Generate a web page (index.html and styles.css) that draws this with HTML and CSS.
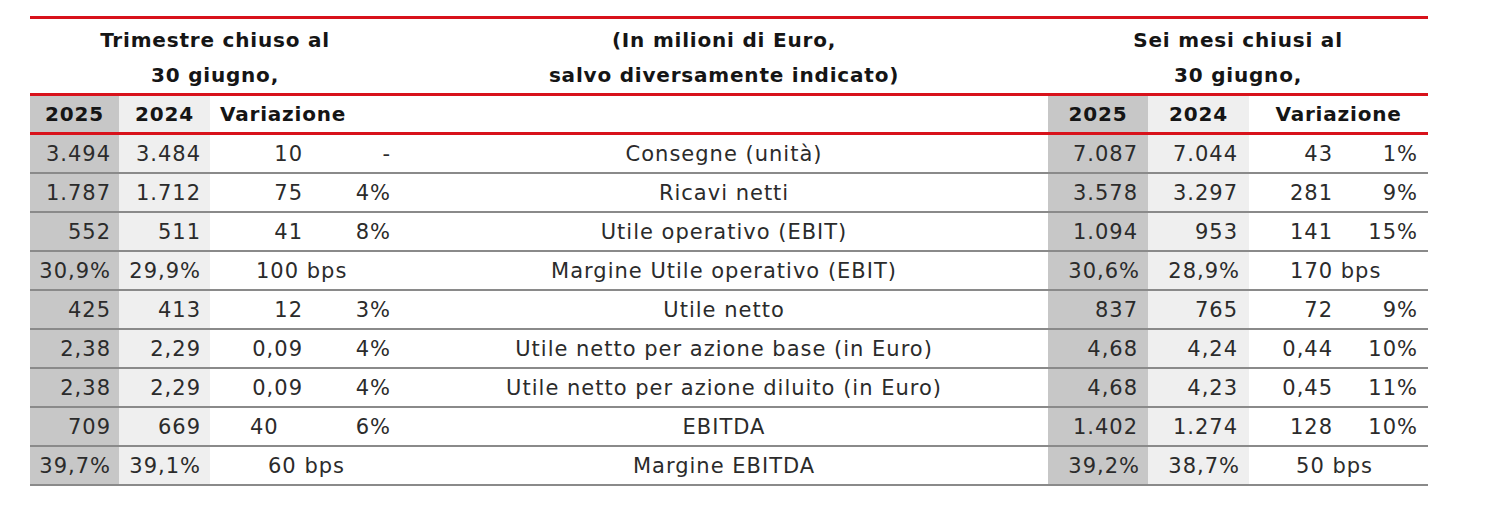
FILE: index.html
```html
<!DOCTYPE html>
<html lang="it">
<head>
<meta charset="utf-8">
<title>Risultati</title>
<link rel="stylesheet" href="styles.css">
</head>
<body>
<div class="page">
<table class="fin">
  <colgroup>
    <col class="c-a"><col class="c-b"><col class="c-v"><col class="c-p">
    <col class="c-label">
    <col class="c-a2"><col class="c-b2"><col class="c-v2"><col class="c-p2">
  </colgroup>
  <thead>
    <tr class="h1">
      <th colspan="4" class="grp">Trimestre chiuso al<br>30 giugno,</th>
      <th class="grp">(In milioni di Euro,<br>salvo diversamente indicato)</th>
      <th colspan="4" class="grp">Sei mesi chiusi al<br>30 giugno,</th>
    </tr>
    <tr class="h2">
      <th class="dk">2025</th><th class="lt">2024</th><th colspan="2" class="var-l">Variazione</th>
      <th></th>
      <th class="dk">2025</th><th class="lt">2024</th><th colspan="2" class="var-r">Variazione</th>
    </tr>
  </thead>
  <tbody>
    <tr><td class="dk">3.494</td><td class="lt">3.484</td><td class="v">10</td><td class="p">-</td><td class="lbl">Consegne (unità)</td><td class="dk">7.087</td><td class="lt">7.044</td><td class="v">43</td><td class="p">1%</td></tr>
    <tr><td class="dk">1.787</td><td class="lt">1.712</td><td class="v">75</td><td class="p">4%</td><td class="lbl">Ricavi netti</td><td class="dk">3.578</td><td class="lt">3.297</td><td class="v">281</td><td class="p">9%</td></tr>
    <tr><td class="dk">552</td><td class="lt">511</td><td class="v">41</td><td class="p">8%</td><td class="lbl">Utile operativo (EBIT)</td><td class="dk">1.094</td><td class="lt">953</td><td class="v">141</td><td class="p">15%</td></tr>
    <tr><td class="dk">30,9%</td><td class="lt">29,9%</td><td colspan="2" class="bps-l">100 bps</td><td class="lbl">Margine Utile operativo (EBIT)</td><td class="dk">30,6%</td><td class="lt">28,9%</td><td colspan="2" class="bps-r">170 bps</td></tr>
    <tr><td class="dk">425</td><td class="lt">413</td><td class="v">12</td><td class="p">3%</td><td class="lbl">Utile netto</td><td class="dk">837</td><td class="lt">765</td><td class="v">72</td><td class="p">9%</td></tr>
    <tr><td class="dk">2,38</td><td class="lt">2,29</td><td class="v">0,09</td><td class="p">4%</td><td class="lbl">Utile netto per azione base (in Euro)</td><td class="dk">4,68</td><td class="lt">4,24</td><td class="v">0,44</td><td class="p">10%</td></tr>
    <tr><td class="dk">2,38</td><td class="lt">2,29</td><td class="v">0,09</td><td class="p">4%</td><td class="lbl">Utile netto per azione diluito (in Euro)</td><td class="dk">4,68</td><td class="lt">4,23</td><td class="v">0,45</td><td class="p">11%</td></tr>
    <tr><td class="dk">709</td><td class="lt">669</td><td class="v left">40</td><td class="p">6%</td><td class="lbl">EBITDA</td><td class="dk">1.402</td><td class="lt">1.274</td><td class="v">128</td><td class="p">10%</td></tr>
    <tr><td class="dk">39,7%</td><td class="lt">39,1%</td><td colspan="2" class="bps-l2">60 bps</td><td class="lbl">Margine EBITDA</td><td class="dk">39,2%</td><td class="lt">38,7%</td><td colspan="2" class="bps-r2">50 bps</td></tr>
  </tbody>
</table>
</div>
</body>
</html>
```

FILE: styles.css
```css
html, body {
  margin: 0;
  padding: 0;
  background: #ffffff;
}

.page {
  padding: 16px 0 0 30px;
}

.fin {
  border-collapse: collapse;
  table-layout: fixed;
  width: 1398px;
  font-family: "DejaVu Sans", "Liberation Sans", sans-serif;
  font-size: 21px;
  letter-spacing: 1px;
  color: #2b2b2b;
}

.c-a { width: 89px; }
.c-b { width: 91px; }
.c-v { width: 100px; }
.c-p { width: 90px; }
.c-label { width: 648px; }
.c-a2 { width: 100px; }
.c-b2 { width: 101px; }
.c-v2 { width: 91px; }
.c-p2 { width: 88px; }

.fin th, .fin td {
  padding: 0;
  white-space: nowrap;
}

.fin th {
  font-size: 20px;
  font-weight: 700;
  letter-spacing: 0.8px;
  color: #151515;
}

.h1 th {
  border-top: 3px solid #d8121b;
  border-bottom: 3px solid #d8121b;
  height: 71px;
  line-height: 35px;
  text-align: center;
  vertical-align: middle;
  padding-top: 3px;
}

.h2 th {
  border-bottom: 3px solid #d8121b;
  height: 36px;
  text-align: center;
  vertical-align: middle;
}

.h2 .var-l {
  text-align: left;
  padding-left: 10px;
}

.h2 .var-r {
  text-align: center;
}

.fin td {
  border-bottom: 2px solid #8a8a8a;
  height: 37px;
  text-align: right;
  vertical-align: middle;
}

.dk { background: #c7c7c7; }
.lt { background: #efefef; }

td.dk { padding-right: 8px; }
td.lt { padding-right: 9px; }

.fin td:nth-child(6).dk { padding-right: 10px; }
.fin td:nth-child(7).lt { padding-right: 11px; }

td.v { padding-right: 7px; }
td.p { padding-right: 9px; }
td.p:last-child { padding-right: 10px; }

td.v.left {
  text-align: left;
  padding-left: 40px;
}

td.lbl { text-align: center; }

td.bps-l { text-align: left; padding-left: 46px; }
td.bps-l2 { text-align: left; padding-left: 58px; }
td.bps-r { text-align: left; padding-left: 41px; }
td.bps-r2 { text-align: left; padding-left: 47px; }
```
